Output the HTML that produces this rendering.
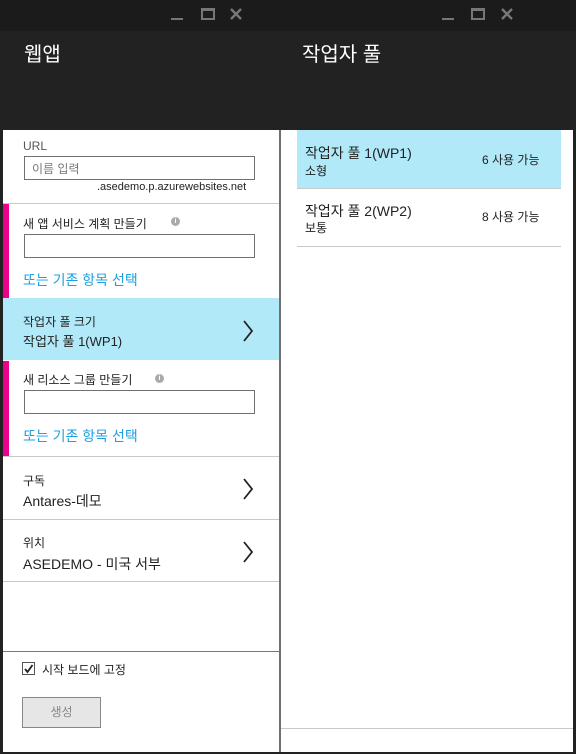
<!DOCTYPE html>
<html><head><meta charset="utf-8"><style>
*{margin:0;padding:0;box-sizing:border-box}
body{width:576px;height:754px;background:#222;position:relative;overflow:hidden;font-family:"Liberation Sans","Noto Sans CJK KR",sans-serif;color:#222}
.a{position:absolute}
.top{left:0;top:0;width:576px;height:31px;background:#1b1b1b}
.ctl{color:#777;font-size:18px}
.ttl{color:#fff;font-size:20px}
.panel{background:#fff}
.sep{height:1px;background:#c8c8c8}
.lbl{font-size:12px;color:#222}
.inp{border:1px solid #707070;background:#fff;height:24px}
.link{color:#1ba1e2;font-size:14px}
.pink{background:#ec008c;width:6px}
.chev{width:14px;height:24px}
.t13{font-size:13px}
.t14{font-size:14px}
.info{width:9px;height:9px;border-radius:50%;background:#aaa;color:#fff;font-size:7px;text-align:center;line-height:9px;font-weight:bold}
</style></head><body>
<div class="a top"></div>
<div class="a" style="left:171px;top:18px;width:12px;height:2px;background:#777"></div>
<div class="a" style="left:201px;top:8px;width:14px;height:12px;border:2px solid #777;border-top-width:3px"></div>
<svg class="a" style="left:230px;top:8px" width="12" height="12"><path d="M1 1L11 11M11 1L1 11" stroke="#777" stroke-width="2.4"/></svg>
<div class="a" style="left:442px;top:18px;width:12px;height:2px;background:#777"></div>
<div class="a" style="left:471px;top:8px;width:14px;height:12px;border:2px solid #777;border-top-width:3px"></div>
<svg class="a" style="left:501px;top:8px" width="12" height="12"><path d="M1 1L11 11M11 1L1 11" stroke="#777" stroke-width="2.4"/></svg>
<div class="a ttl" style="left:24px;top:38px">웹앱</div>
<div class="a ttl" style="left:302px;top:38px">작업자 풀</div>

<!-- left panel -->
<div class="a panel" style="left:3px;top:130px;width:276px;height:622px"></div>
<div class="a" style="left:279px;top:130px;width:2px;height:622px;background:#707070"></div>
<div class="a lbl" style="left:23px;top:139px;color:#555">URL</div>
<div class="a inp" style="left:24px;top:156px;width:231px"></div>
<div class="a" style="left:32px;top:160px;font-size:12px;color:#777">이름 입력</div>
<div class="a" style="left:97px;top:181px;font-size:11px;color:#222">.asedemo.p.azurewebsites.net</div>
<div class="a sep" style="left:3px;top:203px;width:276px"></div>
<div class="a pink" style="left:3px;top:204px;height:94px"></div>
<div class="a lbl" style="left:23px;top:215px">새 앱 서비스 계획 만들기</div>
<div class="a info" style="left:171px;top:217px">i</div>
<div class="a inp" style="left:24px;top:234px;width:231px"></div>
<div class="a link" style="left:23px;top:270px">또는 기존 항목 선택</div>
<div class="a" style="left:3px;top:298px;width:276px;height:62px;background:#b1e9f8"></div>
<div class="a lbl" style="left:23px;top:313px">작업자 풀 크기</div>
<div class="a t13" style="left:23px;top:331px">작업자 풀 1(WP1)</div>
<svg class="a chev" style="left:241px;top:319px"><path d="M3 2L11 12L3 22" fill="none" stroke="#222" stroke-width="1.8"/></svg>
<div class="a pink" style="left:3px;top:361px;height:95px"></div>
<div class="a lbl" style="left:23px;top:371px">새 리소스 그룹 만들기</div>
<div class="a info" style="left:155px;top:374px">i</div>
<div class="a inp" style="left:24px;top:390px;width:231px"></div>
<div class="a link" style="left:23px;top:426px">또는 기존 항목 선택</div>
<div class="a sep" style="left:3px;top:456px;width:276px"></div>
<div class="a lbl" style="left:23px;top:472px">구독</div>
<div class="a t14" style="left:23px;top:491px">Antares-데모</div>
<svg class="a chev" style="left:241px;top:477px"><path d="M3 2L11 12L3 22" fill="none" stroke="#222" stroke-width="1.8"/></svg>
<div class="a sep" style="left:3px;top:519px;width:276px"></div>
<div class="a lbl" style="left:23px;top:534px">위치</div>
<div class="a t14" style="left:23px;top:554px">ASEDEMO - 미국 서부</div>
<svg class="a chev" style="left:241px;top:540px"><path d="M3 2L11 12L3 22" fill="none" stroke="#222" stroke-width="1.8"/></svg>
<div class="a sep" style="left:3px;top:581px;width:276px"></div>
<div class="a" style="left:3px;top:651px;width:276px;height:1px;background:#777"></div>
<div class="a" style="left:22px;top:662px;width:13px;height:13px;border:1px solid #555"></div>
<svg class="a" style="left:23px;top:663px" width="11" height="11"><path d="M2 6L4.5 9L9.5 2" fill="none" stroke="#222" stroke-width="1.8"/></svg>
<div class="a lbl" style="left:42px;top:661px">시작 보드에 고정</div>
<div class="a" style="left:22px;top:697px;width:79px;height:31px;background:#e6e6e6;border:1px solid #888;text-align:center;line-height:29px;font-size:12px;color:#888">생성</div>

<!-- right panel -->
<div class="a panel" style="left:281px;top:130px;width:292px;height:622px"></div>
<div class="a" style="left:297px;top:130px;width:264px;height:58px;background:#b1e9f8"></div>
<div class="a t14" style="left:305px;top:143px">작업자 풀 1(WP1)</div>
<div class="a lbl" style="left:305px;top:162px">소형</div>
<div class="a lbl" style="left:482px;top:151px">6 사용 가능</div>
<div class="a sep" style="left:297px;top:188px;width:264px"></div>
<div class="a t14" style="left:305px;top:201px">작업자 풀 2(WP2)</div>
<div class="a lbl" style="left:305px;top:219px">보통</div>
<div class="a lbl" style="left:482px;top:208px">8 사용 가능</div>
<div class="a sep" style="left:297px;top:246px;width:264px"></div>
<div class="a sep" style="left:281px;top:728px;width:292px"></div>
</body></html>
